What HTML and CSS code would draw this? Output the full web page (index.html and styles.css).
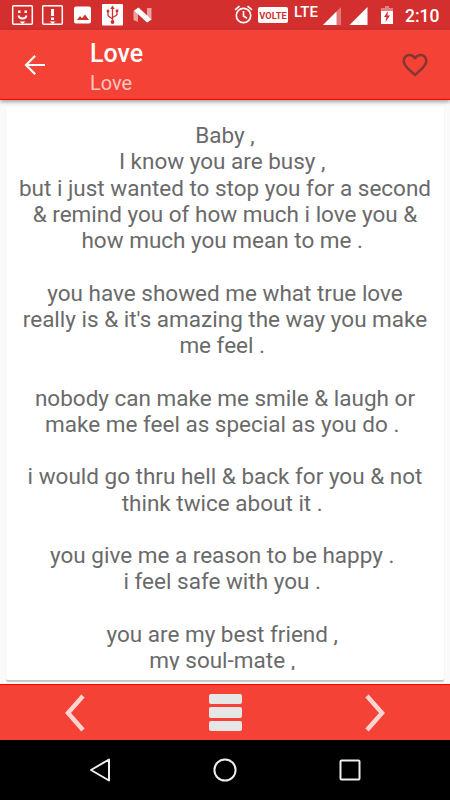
FILE: index.html
```html
<!DOCTYPE html>
<html lang="en">
<head>
<meta charset="utf-8">
<title>Love</title>
<link rel="stylesheet" href="styles.css">
</head>
<body>
<div class="screen">
  <header class="status">
    <svg class="notifications" width="160" height="30" viewBox="0 0 160 30">
      <g fill="none" stroke="#fff" stroke-width="1.5">
        <path d="M13.700 5.700H31.300Q32.300 5.700 32.300 6.700V23.300Q32.300 24.300 31.300 24.300H13.700Q12.700 24.300 12.700 23.300V6.700Q12.700 5.700 13.700 5.700Z"/>
        <path d="M43.700 5.700H61.300Q62.300 5.700 62.300 6.700V23.300Q62.300 24.300 61.300 24.300H43.700Q42.700 24.300 42.700 23.300V6.700Q42.700 5.700 43.700 5.700Z"/>
        <path d="M18.500 15.500q.5 3 4 3t4-3" stroke-width="1.800"/>
      </g>
      <g fill="#fff">
        <path d="M18 10.500h2.500v2.500h-2.500zM24.500 10.500h2.500v2.500h-2.500zM19.500 21.500h6l-3 2.500zM49.500 21.500h6l-3 2.500zM51 9h3v7h-3zM51 17.500h3v2.500h-3z"/>
        <path fill-rule="evenodd" d="M76 6.500h13q2 0 2 2v13q0 2-2 2h-13q-2 0-2-2v-13q0-2 2-2zM77 20h12l-4-5.500-3 3.800-2-2.300z"/>
        <rect x="102" y="4" width="21" height="21.500" rx="1"/>
        <path opacity=".55" d="M133.500 11l4.500-2.500v13.500l-4.500-2zM147 8h4.500v11.500l-4.500 2.500z"/>
        <path d="M134 10.500l4.500-3 13 12-4.500 3z"/>
      </g>
      <g fill="none" stroke="#d32f2f" stroke-width="1.300">
        <path d="M112.500 22V7M108 11v4q0 1 1 1.500l3.500 2.500M117 11v3q0 1-1 1.500l-3.500 2"/>
      </g>
      <path fill="#d32f2f" d="M110.300 9l2.200-3.500L114.700 9zM115.700 9.500h2.600v2.600h-2.600z"/>
      <circle cx="108" cy="11" r="1.500" fill="#d32f2f"/><circle cx="112.500" cy="22" r="1.900" fill="#d32f2f"/>
    </svg>
    <div class="system">
      <svg width="19" height="20" viewBox="0 0 19 20" fill="none" stroke="#fff" stroke-width="1.700">
        <circle cx="9.500" cy="10.500" r="7.200"/><path d="M1 4.800L5.500 1.200M18 4.800L13.500 1.200M9.500 6v5l3.500 2.200"/>
      </svg>
      <span class="volte">VOLTE</span>
      <span class="lte">LTE</span>
      <svg class="signals" width="46" height="18" viewBox="0 0 46 18" fill="#fff">
        <path opacity=".35" d="M0 18L18 0V18z"/><path d="M0 18L13.500 4.500V18zM26.500 18L44.500 0V18z"/>
      </svg>
      <svg class="battery" width="12" height="18" viewBox="0 0 12 18">
        <path fill="#fff" opacity=".4" d="M0 5V2h4V0h4v2h4v3z"/><path fill="#fff" d="M0 5h12v13H0z"/><path fill="#d32f2f" d="M7 5l-4 6h2.500l-1 5 4.500-6.500H6.500z"/>
      </svg>
      <span class="clock">2:10</span>
    </div>
  </header>
  <div class="toolbar">
    <svg class="back" width="22" height="22" viewBox="0 0 22 22" fill="none" stroke="#fff" stroke-width="2.200"><path d="M21 11H2M11.200 1.800L2 11l9.200 9.200"/></svg>
    <div class="titles"><h1>Love</h1><p>Love</p></div>
    <svg class="heart" width="30" height="30" viewBox="0 0 24 24"><path fill="#853532" d="M16.500 3c-1.740 0-3.410.810-4.500 2.090C10.910 3.810 9.240 3 7.500 3 4.420 3 2 5.420 2 8.500c0 3.780 3.400 6.860 8.550 11.540L12 21.350l1.450-1.320C18.600 15.360 22 12.280 22 8.500 22 5.420 19.580 3 16.500 3zm-4.400 15.550l-.1.100-.1-.1C7.140 14.240 4 11.390 4 8.500 4 6.500 5.500 5 7.500 5c1.540 0 3.040.990 3.570 2.360h1.870C13.460 5.990 14.960 5 16.500 5c2 0 3.500 1.500 3.500 3.500 0 2.890-3.140 5.740-7.900 10.050z"/></svg>
  </div>
  <main class="content">
    <article class="card">
      <div class="message">Baby ,
I know you are busy , 
but i just wanted to stop you for a second
&amp; remind you of how much i love you &amp;
how much you mean to me . 

you have showed me what true love
really is &amp; it's amazing the way you make
me feel . 

nobody can make me smile &amp; laugh or
make me feel as special as you do . 

i would go thru hell &amp; back for you &amp; not
think twice about it . 

you give me a reason to be happy . 
i feel safe with you . 

you are my best friend , 
my soul-mate , </div>
    </article>
  </main>
  <div class="pager">
    <svg width="20" height="38" viewBox="0 0 20 38" fill="none" stroke="#ffd5d3" stroke-width="4.500"><path d="M18 2L3 19l15 17"/></svg>
    <div class="menu"><i></i><i></i><i></i></div>
    <svg width="20" height="38" viewBox="0 0 20 38" fill="none" stroke="#ffd5d3" stroke-width="4.500"><path d="M2 2l15 17L2 36"/></svg>
  </div>
  <nav class="navbar">
    <svg width="24" height="26" viewBox="0 0 24 26" fill="none" stroke="#eee" stroke-width="2" stroke-linejoin="round"><path d="M21 2.500v21L3 13z"/></svg>
    <svg width="24" height="26" viewBox="0 0 24 26" fill="none" stroke="#eee" stroke-width="2"><circle cx="12" cy="13" r="10.600"/></svg>
    <svg width="24" height="26" viewBox="0 0 24 26" fill="none" stroke="#eee" stroke-width="2"><rect x="2.500" y="3.500" width="19" height="19" rx="1"/></svg>
  </nav>
</div>
</body>
</html>
```
FILE: styles.css
```css
* { box-sizing: border-box; }
body { margin: 0; font-family: Roboto, sans-serif; }
svg { display: block; flex: none; }
.screen { width: 450px; height: 800px; display: flex; flex-direction: column; overflow: hidden; background: #fafafa; }
.status { height: 30px; flex: none; display: flex; justify-content: space-between; background: #d32f2f; color: #fff; }
.system { display: flex; align-items: flex-start; width: 216px; padding-top: 5px; }
.volte { width: 30px; height: 16px; margin: 2px 0 0 5px; border-radius: 2px; background: #fff; color: #d32f2f; font-size: 9.3px; font-weight: 700; line-height: 17px; text-align: center; }
.lte { width: 22px; margin-left: 6px; font-size: 15px; font-weight: 500; line-height: 14px; }
.signals { margin: 2px 0 0 7px; }
.battery { margin: 1px 0 0 12px; }
.clock { margin-left: 12px; font-size: 17.5px; font-weight: 500; line-height: 22px; }
.toolbar { height: 70px; flex: none; display: flex; align-items: center; background: #f44336; border-bottom: 1px solid #f00; box-shadow: 0 2px 4px rgba(0,0,0,.35); z-index: 1; color: #fff; }
.back { margin-left: 24px; }
.titles { flex: 1; margin-left: 44px; padding-top: 6px; }
h1 { margin: 0; font-size: 25px; font-weight: 500; line-height: 31px; }
.titles p { margin: 0; font-size: 20px; line-height: 29px; color: rgba(255,255,255,.7); }
.heart { margin-right: 20px; }
.content { flex: 1; min-height: 0; padding: 7px 6px 3px; }
.card { height: 100%; padding: 15px 6px 10px; background: #fff; border-radius: 2px; border-bottom: 1px solid #c5c5c5; box-shadow: 0 1px 1px rgba(0,0,0,.2); }
.message { height: 100%; overflow: hidden; white-space: pre; text-align: center; font-size: 22.5px; line-height: 26.25px; color: #6a6a6a; }
.pager { height: 56px; flex: none; display: flex; justify-content: space-between; align-items: center; padding: 0 65px; background: #f44336; border-top: 1px solid #f00; }
.menu { display: grid; gap: 3px; width: 33px; margin-left: 1px; }
.menu i { height: 10.5px; background: #e6e6e6; border-radius: 2px; }
.navbar { height: 60px; flex: none; display: flex; justify-content: space-between; align-items: center; padding: 0 88px; background: #000; }
```
